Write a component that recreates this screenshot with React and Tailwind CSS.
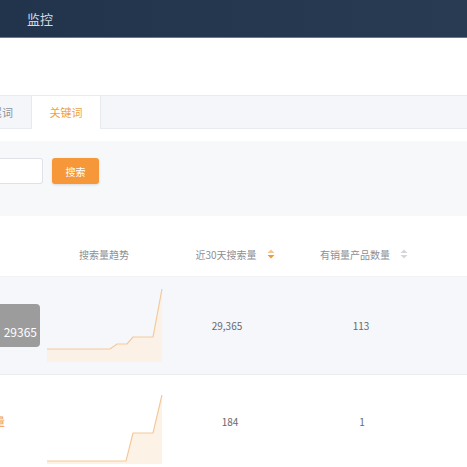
const font = { fontFamily: '"Noto Sans CJK SC", "Noto Sans", sans-serif' };

const SortIcon = ({ active }) => (
  <svg width="8" height="10" viewBox="0 0 8 10" className="ml-[10px]">
    <path d="M4 0.5 L7.5 4 L0.5 4 Z" fill={active ? "#f6c48f" : "#d3d6dc"} />
    <path d="M4 9.5 L7.5 6 L0.5 6 Z" fill={active ? "#f0993a" : "#d3d6dc"} />
  </svg>
);

const Trend = ({ points, h }) => {
  const line = points.map((p) => p.join(",")).join(" ");
  const area = `2,${h} ${line} 117,${h}`;
  return (
    <svg width="118" height={h} viewBox={`0 0 118 ${h}`}>
      <polygon points={area} fill="#fdf0e2" opacity="0.85" />
      <polyline points={line} fill="none" stroke="#f3c99c" strokeWidth="1.2" />
    </svg>
  );
};

export default function App() {
  return (
    <div className="w-[467px] h-[467px] overflow-hidden bg-white" style={font}>
      {/* top bar */}
      <div className="h-[38px] bg-gradient-to-r from-[#22344b] to-[#293b52] border-b border-[#6b7888] flex items-center pl-[27px]">
        <span className="text-[13px] text-[#d5dbe3]">监控</span>
      </div>

      <div className="h-[57px] bg-white" />

      {/* tabs */}
      <div className="h-[34px] bg-[#f4f6f9] border-t border-[#e8ebf0] border-b flex">
        <div className="w-[32px] overflow-hidden flex justify-end items-center border-r border-[#e6e9ee]">
          <span className="text-[11px] text-[#8c9199] whitespace-nowrap mr-[18px]">长尾词</span>
        </div>
        <div className="w-[69px] bg-white border-r border-[#e6e9ee] flex items-center justify-center -mb-px">
          <span className="text-[11px] text-[#efa049]">关键词</span>
        </div>
      </div>

      <div className="h-[12px] bg-white" />

      {/* search */}
      <div className="h-[75px] bg-[#f7f8fa] flex items-start gap-[9px] pt-[17px]">
        <div className="w-[43px] h-[26px] bg-white border border-l-0 border-[#dfe2e8] rounded-r-[3px]" />
        <button className="w-[47px] h-[26px] bg-[#f6983a] rounded-[3px] text-[10px] text-white shadow-sm">
          搜索
        </button>
      </div>

      {/* table */}
      <div className="pt-[16px] bg-white">
        <div className="h-[45px] flex items-center text-[10px] text-[#8b8f96] border-b border-[#f0f2f5]">
          <div className="w-[40px]" />
          <div className="w-[128px] text-center">搜索量趋势</div>
          <div className="w-[126px] flex items-center justify-center pl-[8px]">
            近30天搜索量
            <SortIcon active />
          </div>
          <div className="w-[140px] flex items-center justify-center">
            有销量产品数量
            <SortIcon />
          </div>
        </div>

        <div className="relative h-[98px] bg-[#f5f7fa] border-b border-[#e9ecf1] flex items-center text-[10px] text-[#666a70]">
          <div className="absolute left-0 top-[27px] w-[40px] h-[43px] bg-[#9c9c9c] rounded-r-[4px] flex items-end justify-end pr-[3px] pb-[6px]">
            <span className="text-[12px] text-white">29365</span>
          </div>
          <div className="w-[40px]" />
          <div className="w-[128px] flex justify-center pt-[12px] pb-[12px] self-stretch items-end">
            <Trend
              h={74}
              points={[[2, 61], [65, 61], [72, 56], [82, 56], [88, 49], [108, 49], [117, 1]]}
            />
          </div>
          <div className="w-[126px] text-center pr-[8px]">29,365</div>
          <div className="w-[140px] text-center pr-[6px]">113</div>
        </div>

        <div className="h-[92px] bg-white flex items-center text-[10px] text-[#666a70]">
          <div className="w-[40px] overflow-hidden flex justify-end">
            <span className="text-[11px] text-[#efa049] whitespace-nowrap mr-[35px]">搜索量</span>
          </div>
          <div className="w-[128px] flex justify-center self-stretch items-end pb-[3px]">
            <Trend h={70} points={[[2, 67], [81, 67], [88, 39], [108, 39], [117, 1]]} />
          </div>
          <div className="w-[126px] text-center pr-[2px]">184</div>
          <div className="w-[140px] text-center pr-[4px]">1</div>
        </div>
      </div>
    </div>
  );
}
